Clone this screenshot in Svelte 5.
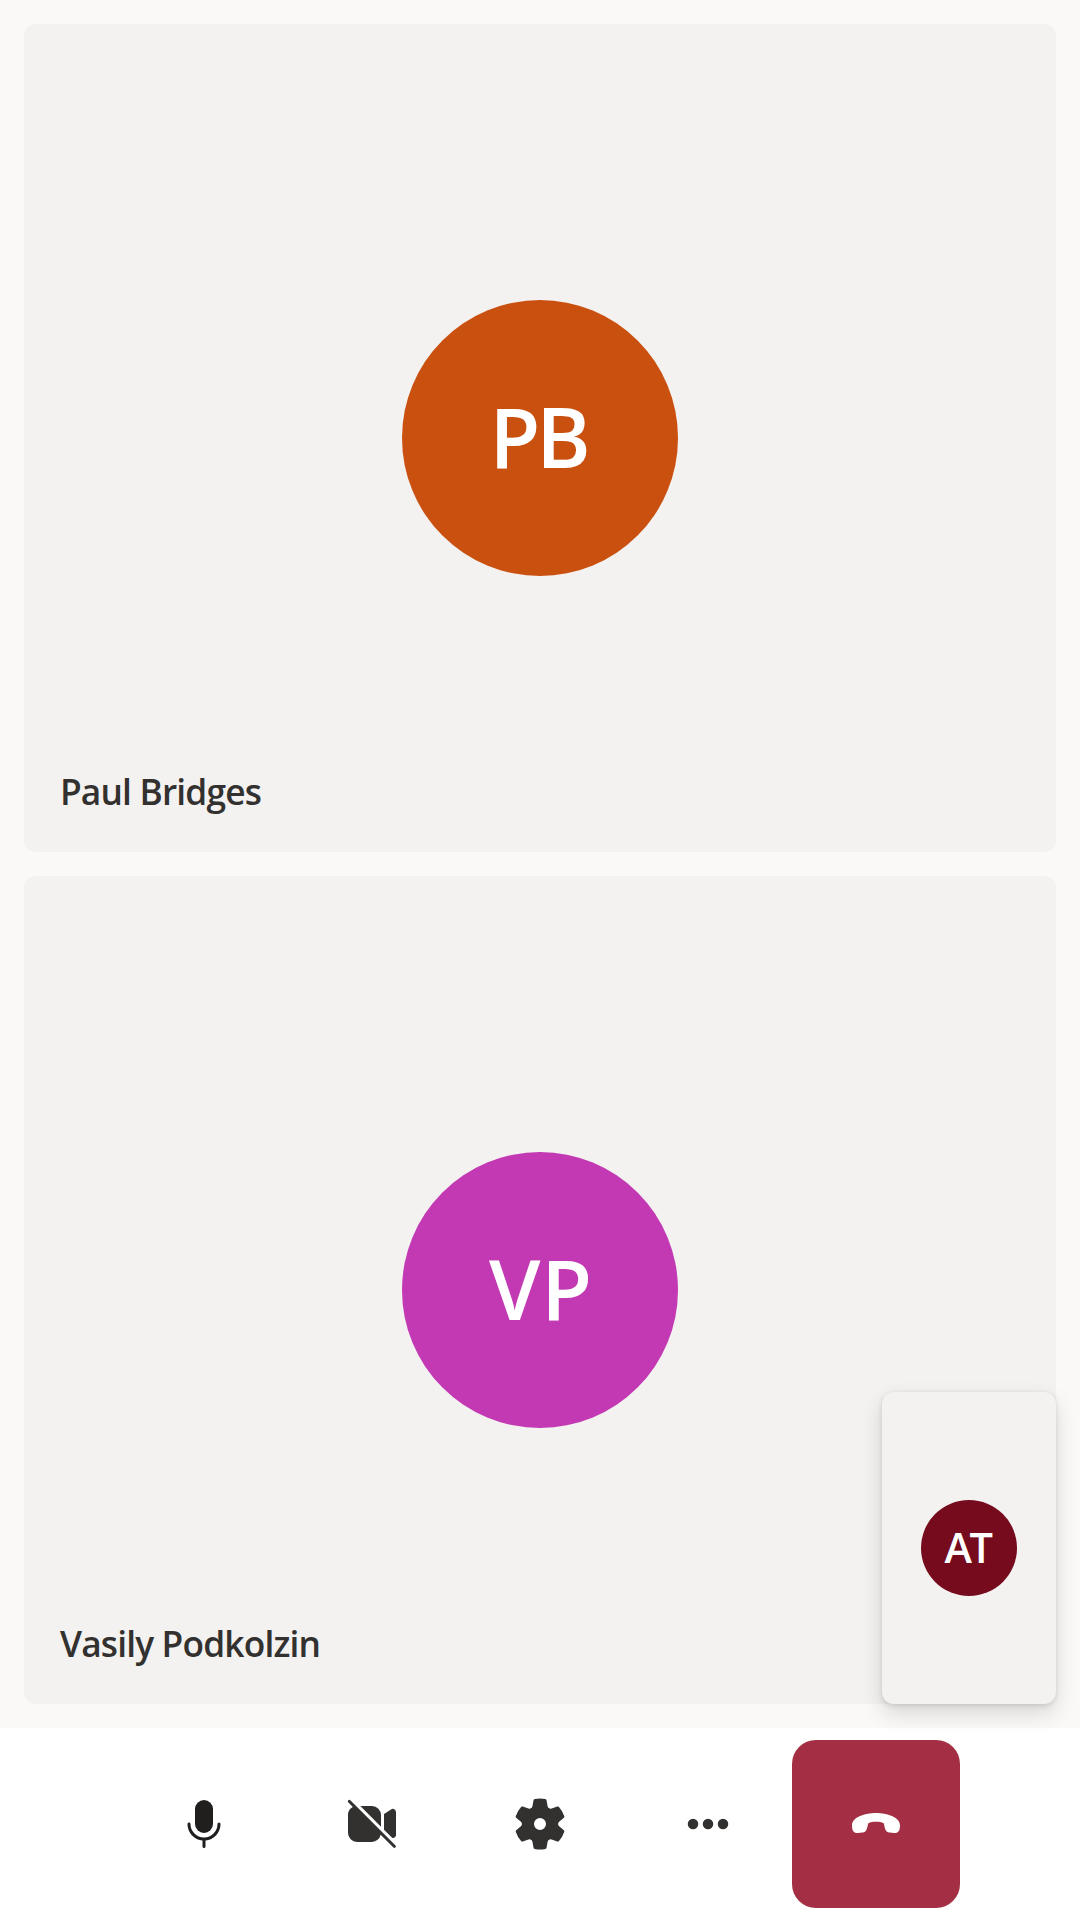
<script>
  const participants = [
    { initials: 'PB', name: 'Paul Bridges', tone: 'orange' },
    { initials: 'VP', name: 'Vasily Podkolzin', tone: 'magenta' }
  ];
</script>

<div class="call">
  <main class="gallery">
    {#each participants as person}
      <section class="tile">
        <div class="avatar {person.tone}"><span>{person.initials}</span></div>
        <div class="name">{person.name}</div>
      </section>
    {/each}
    <aside class="self">
      <div class="avatar small"><span>AT</span></div>
    </aside>
  </main>

  <footer class="controls">
    <button class="mic" aria-label="Mute">
      <svg viewBox="0 0 20 20">
        <path d="M10 13a3 3 0 0 0 3-3V5a3 3 0 0 0-6 0v5a3 3 0 0 0 3 3Z" />
        <path d="M5 9.5c.28 0 .5.22.5.5a4.5 4.5 0 1 0 9 0 .5.5 0 0 1 1 0 5.5 5.5 0 0 1-5 5.48v2.02a.5.5 0 0 1-1 0v-2.02A5.5 5.5 0 0 1 4.5 10c0-.28.22-.5.5-.5Z" />
      </svg>
    </button>
    <button aria-label="Turn camera on">
      <svg viewBox="0 0 20 20">
        <path d="M2.85 2.15a.5.5 0 1 0-.7.7L3.6 4.3A3 3 0 0 0 2 7v6a3 3 0 0 0 3 3h5a3 3 0 0 0 2.87-2.43l4.28 4.28a.5.5 0 0 0 .7-.7l-15-15Z" />
        <path d="M13 7v3.88L6.12 4H10a3 3 0 0 1 3 3Z" />
        <path d="M14 11.88V6.7l2.35-1.56A1.06 1.06 0 0 1 18 6v7.95a1.05 1.05 0 0 1-1.3.6L14 11.88Z" />
      </svg>
    </button>
    <button aria-label="Settings">
      <svg viewBox="0 0 20 20">
        <path d="M1.91 7.38A8.5 8.5 0 0 1 3.7 4.3a.5.5 0 0 1 .54-.13l1.92.68a1 1 0 0 0 1.32-.76l.36-2a.5.5 0 0 1 .4-.4 8.53 8.53 0 0 1 3.55 0c.2.04.35.2.38.4l.37 2a1 1 0 0 0 1.32.76l1.92-.68a.5.5 0 0 1 .54.13 8.5 8.5 0 0 1 1.78 3.08c.06.2 0 .4-.15.54l-1.56 1.32a1 1 0 0 0 0 1.52l1.56 1.32a.5.5 0 0 1 .15.54 8.5 8.5 0 0 1-1.78 3.08.5.5 0 0 1-.54.13l-1.92-.68a1 1 0 0 0-1.32.76l-.37 2a.5.5 0 0 1-.38.4 8.53 8.53 0 0 1-3.56 0 .5.5 0 0 1-.39-.4l-.36-2a1 1 0 0 0-1.32-.76l-1.92.68a.5.5 0 0 1-.54-.13 8.5 8.5 0 0 1-1.78-3.08.5.5 0 0 1 .15-.54l1.56-1.32a1 1 0 0 0 0-1.52L2.06 7.92a.5.5 0 0 1-.15-.54ZM8 10a2 2 0 1 0 4 0 2 2 0 0 0-4 0Z" />
      </svg>
    </button>
    <button aria-label="More options">
      <svg viewBox="0 0 20 20">
        <circle cx="5" cy="10" r="1.75" />
        <circle cx="10" cy="10" r="1.75" />
        <circle cx="15" cy="10" r="1.75" />
      </svg>
    </button>
    <button class="leave" aria-label="Leave call">
      <svg viewBox="0 0 60 60">
        <path d="M30 19C41 19 54 23.2 54 31.2C54 37 52.3 39 48.3 39L43.4 38.5C38.8 38 39 33.5 37.7 29.2C35.5 28.1 33 27.7 30 27.7C27 27.7 24.5 28.1 22.3 29.2C21 33.5 21.2 38 16.6 38.5L11.7 39C7.7 39 6 37 6 31.2C6 23.2 19 19 30 19Z" />
      </svg>
    </button>
  </footer>
</div>

<style>
  :global(body) {
    margin: 0;
  }

  .call {
    display: flex;
    flex-direction: column;
    width: 1080px;
    height: 1920px;
    overflow: hidden;
    background: #faf9f8;
    font-family: 'Open Sans', 'Noto Sans', sans-serif;
    font-weight: 600;
  }

  .gallery {
    position: relative;
    z-index: 1;
    display: grid;
    grid-template-rows: 1fr 1fr;
    gap: 24px;
    height: 1728px;
    padding: 24px;
    box-sizing: border-box;
  }

  .tile {
    display: grid;
    grid-template: 1fr / 1fr;
    border-radius: 12px;
    background: #f3f2f1;
  }

  .tile > * {
    grid-area: 1 / 1;
  }

  .avatar {
    display: flex;
    align-items: center;
    justify-content: center;
    place-self: center;
    width: 276px;
    height: 276px;
    padding-bottom: 4px;
    box-sizing: border-box;
    border-radius: 50%;
    color: #fff;
    font-size: 82.6px;
    line-height: 1;
  }

  .orange {
    background: #ca5010;
  }

  .orange span {
    margin-right: -4px;
    letter-spacing: -4px;
    transform: translateX(-4px);
  }

  .magenta {
    background: #c239b3;
  }

  .magenta span {
    letter-spacing: 1px;
    transform: translateX(1px);
  }

  .name {
    place-self: end start;
    padding: 0 0 37px 36px;
    color: #323130;
    font-size: 35.3px;
    line-height: 48px;
    letter-spacing: -0.83px;
    white-space: nowrap;
  }

  /* Floating preview of the local user, over the gallery's lower corner */
  .self {
    position: absolute;
    right: 24px;
    bottom: 24px;
    display: grid;
    width: 174px;
    height: 312px;
    border-radius: 12px;
    background: #f3f2f1;
    box-shadow:
      0 9.6px 21.6px rgba(0, 0, 0, 0.132),
      0 1.8px 5.4px rgba(0, 0, 0, 0.108);
  }

  .small {
    width: 96px;
    height: 96px;
    padding-bottom: 1px;
    background: #750b1c;
    font-size: 41.5px;
  }

  .small span {
    letter-spacing: -2.5px;
    transform: translateX(-1.5px);
  }

  .controls {
    display: flex;
    justify-content: center;
    height: 192px;
    padding: 12px 0;
    box-sizing: border-box;
    background: #fff;
  }

  button {
    display: grid;
    place-items: center;
    width: 168px;
    height: 168px;
    padding: 0;
    border: 0;
    border-radius: 24px;
    background: none;
    color: #323130;
  }

  .mic {
    color: #201f1e;
  }

  .leave {
    background: #a42e43;
    color: #fff;
  }

  svg {
    display: block;
    width: 60px;
    height: 60px;
    fill: currentColor;
  }
</style>
